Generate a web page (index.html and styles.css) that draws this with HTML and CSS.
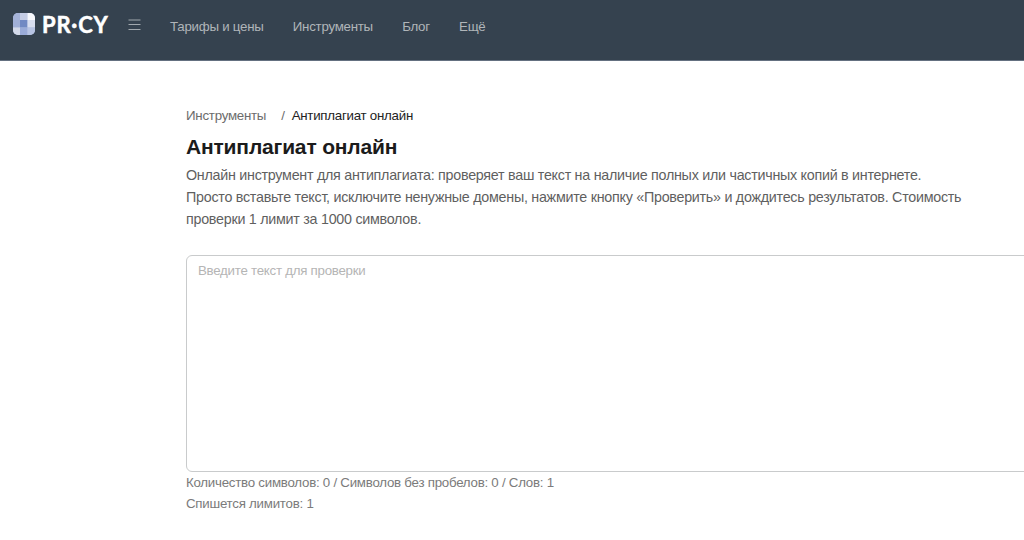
FILE: index.html
```html
<!DOCTYPE html>
<html lang="ru">
<head>
<meta charset="utf-8">
<title>Антиплагиат онлайн</title>
<link rel="stylesheet" href="styles.css">
</head>
<body>
<header class="header">
  <a class="logo">
    <svg class="logo-mark" width="22" height="22" viewBox="0 0 22 22">
      <defs><clipPath id="mark"><rect width="22" height="22" rx="5"/></clipPath></defs>
      <g clip-path="url(#mark)">
        <rect width="22" height="22" fill="#aebbdc"/>
        <rect width="7" height="7" fill="#a5b3d9"/>
        <rect x="7" width="7.500" height="7" fill="#c5cde5"/>
        <rect x="14.500" width="7.500" height="7" fill="#f8f9fd"/>
        <rect y="7" width="7" height="7.500" fill="#a0afd7"/>
        <rect x="7" y="7" width="7.500" height="7.500" fill="#7189c3"/>
        <rect x="14.500" y="7" width="7.500" height="7.500" fill="#d8def0"/>
        <rect y="14.500" width="7" height="7.500" fill="#d3d9e9"/>
        <rect x="7" y="14.500" width="7.500" height="7.500" fill="#9aabd8"/>
        <rect x="14.500" y="14.500" width="7.500" height="7.500" fill="#b7c4e4"/>
      </g>
    </svg>
    <span class="logo-text">PR·CY</span>
  </a>
  <svg class="burger" width="13" height="12" viewBox="0 0 13 12"><path d="M0.500 1h12M0.500 5.500h12M0.500 10.500h12"/></svg>
  <nav class="nav">
    <a>Тарифы и цены</a>
    <a>Инструменты</a>
    <a>Блог</a>
    <a>Ещё</a>
  </nav>
</header>
<main class="content">
  <div class="crumbs"><a class="crumb">Инструменты</a><span class="slash">/</span><span class="current">Антиплагиат онлайн</span></div>
  <h1 class="title">Антиплагиат онлайн</h1>
  <p class="lead">Онлайн инструмент для антиплагиата: проверяет ваш текст на наличие полных или частичных копий в интернете.<br>Просто вставьте текст, исключите ненужные домены, нажмите кнопку «Проверить» и дождитесь результатов. Стоимость<br>проверки 1 лимит за 1000 символов.</p>
  <div class="field">Введите текст для проверки</div>
  <p class="stats">Количество символов: 0 / Символов без пробелов: 0 / Слов: 1<br>Спишется лимитов: 1</p>
</main>
</body>
</html>
```
FILE: styles.css
```css
* { box-sizing: border-box; }
body { margin: 0; height: 540px; overflow: hidden; background: #fff; font-family: "Liberation Sans", Arial, sans-serif; }
.header { display: flex; align-items: flex-start; height: 61px; background: #35424f; border-bottom: 1px solid #647080; }
.logo { display: flex; align-items: center; height: 48px; padding-left: 13px; }
.logo-text { margin-left: 7px; width: 68px; padding-top: 1px; color: #fff; font: 700 22px/48px Lato, sans-serif; letter-spacing: 0.800px; -webkit-text-stroke: 0.500px #fff; }
.burger { margin: 19px 0 0 18px; fill: none; stroke: #a2a9af; stroke-width: 1; }
.nav { display: flex; gap: 29.200px; margin-left: 29px; color: #b0b5b9; font-size: 13.300px; letter-spacing: -0.250px; line-height: 53px; white-space: nowrap; }
.content { padding: 45px 0 0 186px; white-space: nowrap; }
.crumbs { display: flex; height: 20px; font-size: 13.300px; letter-spacing: -0.250px; line-height: 20px; color: #6c6c6c; }
.slash { margin: 0 7px 0 15px; }
.current { color: #222; }
.title { margin: 7px 0 0; height: 28px; color: #1b1b1b; font-size: 21px; letter-spacing: -0.170px; line-height: 28px; }
.lead { margin: 3px 0 0; color: #5f5f5f; font-size: 14.300px; letter-spacing: -0.265px; line-height: 22px; }
.field { width: 860px; height: 217px; margin-top: 25px; padding: 5px 11px; border: 1px solid #c9cbcc; border-radius: 6px; color: #b5b5b5; font-size: 13.300px; letter-spacing: -0.260px; line-height: 20px; }
.stats { margin: 0; color: #7b7b7b; font-size: 13.300px; letter-spacing: -0.250px; line-height: 21px; }
```
